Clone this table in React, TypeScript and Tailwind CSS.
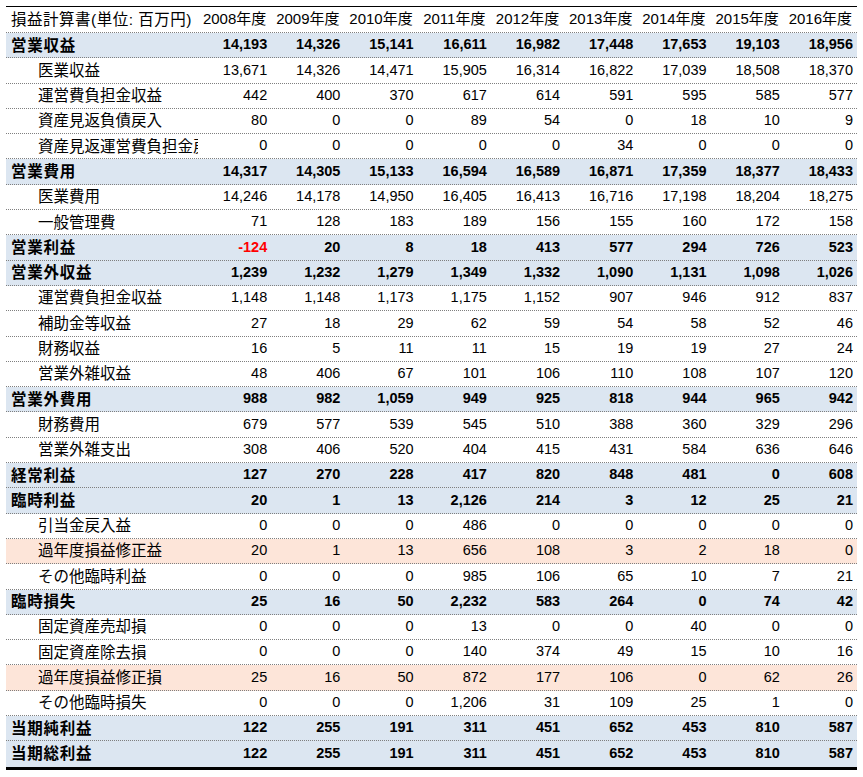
const years = ["2008", "2009", "2010", "2011", "2012", "2013", "2014", "2015", "2016"];

type Row = {
  label: string;
  values: string[];
  kind: "total" | "item" | "pink";
};

const rows: Row[] = [
  { label: "営業収益", kind: "total", values: ["14,193", "14,326", "15,141", "16,611", "16,982", "17,448", "17,653", "19,103", "18,956"] },
  { label: "医業収益", kind: "item", values: ["13,671", "14,326", "14,471", "15,905", "16,314", "16,822", "17,039", "18,508", "18,370"] },
  { label: "運営費負担金収益", kind: "item", values: ["442", "400", "370", "617", "614", "591", "595", "585", "577"] },
  { label: "資産見返負債戻入", kind: "item", values: ["80", "0", "0", "89", "54", "0", "18", "10", "9"] },
  { label: "資産見返運営費負担金戻入", kind: "item", values: ["0", "0", "0", "0", "0", "34", "0", "0", "0"] },
  { label: "営業費用", kind: "total", values: ["14,317", "14,305", "15,133", "16,594", "16,589", "16,871", "17,359", "18,377", "18,433"] },
  { label: "医業費用", kind: "item", values: ["14,246", "14,178", "14,950", "16,405", "16,413", "16,716", "17,198", "18,204", "18,275"] },
  { label: "一般管理費", kind: "item", values: ["71", "128", "183", "189", "156", "155", "160", "172", "158"] },
  { label: "営業利益", kind: "total", values: ["-124", "20", "8", "18", "413", "577", "294", "726", "523"] },
  { label: "営業外収益", kind: "total", values: ["1,239", "1,232", "1,279", "1,349", "1,332", "1,090", "1,131", "1,098", "1,026"] },
  { label: "運営費負担金収益", kind: "item", values: ["1,148", "1,148", "1,173", "1,175", "1,152", "907", "946", "912", "837"] },
  { label: "補助金等収益", kind: "item", values: ["27", "18", "29", "62", "59", "54", "58", "52", "46"] },
  { label: "財務収益", kind: "item", values: ["16", "5", "11", "11", "15", "19", "19", "27", "24"] },
  { label: "営業外雑収益", kind: "item", values: ["48", "406", "67", "101", "106", "110", "108", "107", "120"] },
  { label: "営業外費用", kind: "total", values: ["988", "982", "1,059", "949", "925", "818", "944", "965", "942"] },
  { label: "財務費用", kind: "item", values: ["679", "577", "539", "545", "510", "388", "360", "329", "296"] },
  { label: "営業外雑支出", kind: "item", values: ["308", "406", "520", "404", "415", "431", "584", "636", "646"] },
  { label: "経常利益", kind: "total", values: ["127", "270", "228", "417", "820", "848", "481", "0", "608"] },
  { label: "臨時利益", kind: "total", values: ["20", "1", "13", "2,126", "214", "3", "12", "25", "21"] },
  { label: "引当金戻入益", kind: "item", values: ["0", "0", "0", "486", "0", "0", "0", "0", "0"] },
  { label: "過年度損益修正益", kind: "pink", values: ["20", "1", "13", "656", "108", "3", "2", "18", "0"] },
  { label: "その他臨時利益", kind: "item", values: ["0", "0", "0", "985", "106", "65", "10", "7", "21"] },
  { label: "臨時損失", kind: "total", values: ["25", "16", "50", "2,232", "583", "264", "0", "74", "42"] },
  { label: "固定資産売却損", kind: "item", values: ["0", "0", "0", "13", "0", "0", "40", "0", "0"] },
  { label: "固定資産除去損", kind: "item", values: ["0", "0", "0", "140", "374", "49", "15", "10", "16"] },
  { label: "過年度損益修正損", kind: "pink", values: ["25", "16", "50", "872", "177", "106", "0", "62", "26"] },
  { label: "その他臨時損失", kind: "item", values: ["0", "0", "0", "1,206", "31", "109", "25", "1", "0"] },
  { label: "当期純利益", kind: "total", values: ["122", "255", "191", "311", "451", "652", "453", "810", "587"] },
  { label: "当期総利益", kind: "total", values: ["122", "255", "191", "311", "451", "652", "453", "810", "587"] },
];

export default function App() {
  return (
    <div className="min-h-[777px] bg-white pt-[6px] pl-[6px] font-['Liberation_Sans','Noto_Sans_CJK_JP',sans-serif] text-black antialiased">
      <div className="w-[851px] border-t border-black border-b-[3px]">
        {/* header */}
        <div className="grid h-[26px] grid-cols-[192px_repeat(9,1fr)] items-center border-b border-dotted border-[#7f7f7f] text-[15px]">
          <div className="whitespace-nowrap pl-[5px] text-[15.5px] tracking-[0.5px]">損益計算書(単位: 百万円)</div>
          {years.map((y) => (
            <div key={y} className="whitespace-nowrap text-center">
              {y}年度
            </div>
          ))}
        </div>

        {rows.map((row, i) => {
          const bg =
            row.kind === "total" ? "bg-[#dce6f1]" : row.kind === "pink" ? "bg-[#fde5d9]" : "bg-white";
          const last = i === rows.length - 1;
          return (
            <div
              key={i}
              className={`grid h-[25.3px] grid-cols-[192px_repeat(9,1fr)] items-center ${bg} ${
                last ? "" : "border-b border-dotted border-[#7f7f7f]"
              }`}
            >
              <div
                className={`overflow-hidden whitespace-nowrap text-[15.5px] ${
                  row.kind === "total" ? "pl-[5px] font-bold tracking-[0.75px]" : "pl-[32px]"
                }`}
              >
                {row.label}
              </div>
              {row.values.map((v, j) => (
                <div
                  key={j}
                  className={`pr-[4px] text-right text-[14.5px] ${row.kind === "total" ? "font-bold" : ""} ${
                    v.startsWith("-") ? "text-[#ff0000]" : ""
                  }`}
                >
                  {v}
                </div>
              ))}
            </div>
          );
        })}
      </div>
    </div>
  );
}
